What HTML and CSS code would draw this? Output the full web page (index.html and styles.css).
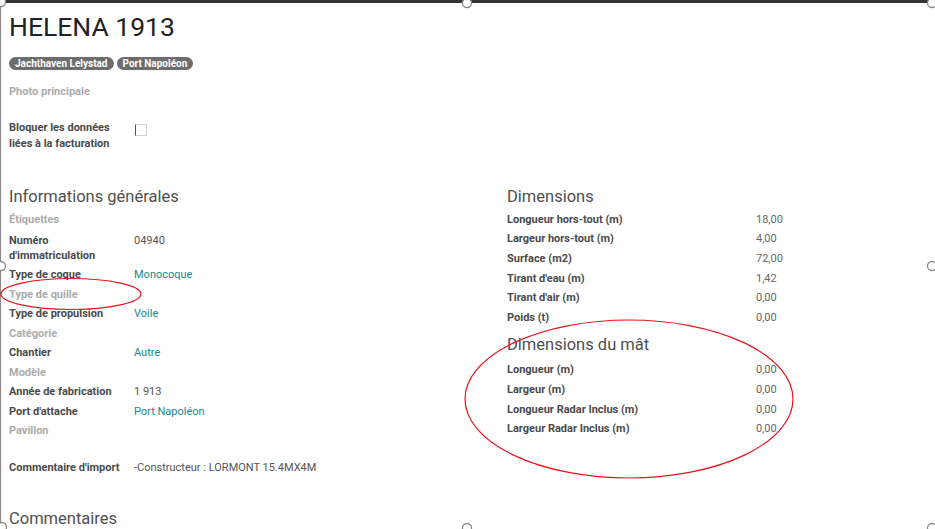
FILE: index.html
```html
<!DOCTYPE html>
<html lang="fr">
<head>
    <meta charset="UTF-8">
    <meta name="viewport" content="width=device-width, initial-scale=1.0">
    <title>HELENA 1913</title>
    <link rel="stylesheet" href="styles.css">
</head>
<body>
    <div class="sheet">
        <h1 class="title">HELENA 1913</h1>

        <div class="tags">
            <span class="tag">Jachthaven Lelystad</span>
            <span class="tag">Port Napoléon</span>
        </div>

        <div class="photo muted">Photo principale</div>

        <div class="lock">
            <span class="label">Bloquer les données<br>liées à la facturation</span>
            <span class="checkbox"></span>
        </div>

        <div class="groups">
            <section class="group left">
                <h2>Informations générales</h2>
                <div class="row"><span class="label muted">Étiquettes</span><span></span></div>
                <div class="row tall"><span class="label">Numéro<br>d'immatriculation</span><span class="value">04940</span></div>
                <div class="row"><span class="label">Type de coque</span><span class="value link">Monocoque</span></div>
                <div class="row"><span class="label muted">Type de quille</span><span></span></div>
                <div class="row"><span class="label">Type de propulsion</span><span class="value link">Voile</span></div>
                <div class="row"><span class="label muted">Catégorie</span><span></span></div>
                <div class="row"><span class="label">Chantier</span><span class="value link">Autre</span></div>
                <div class="row"><span class="label muted">Modèle</span><span></span></div>
                <div class="row"><span class="label">Année de fabrication</span><span class="value">1 913</span></div>
                <div class="row"><span class="label">Port d'attache</span><span class="value link">Port Napoléon</span></div>
                <div class="row"><span class="label muted">Pavillon</span><span></span></div>
                <div class="row import"><span class="label">Commentaire d'import</span><span class="value">-Constructeur : LORMONT 15.4MX4M</span></div>
            </section>

            <section class="group right">
                <h2>Dimensions</h2>
                <div class="row"><span class="label">Longueur hors-tout (m)</span><span class="value">18,00</span></div>
                <div class="row"><span class="label">Largeur hors-tout (m)</span><span class="value">4,00</span></div>
                <div class="row"><span class="label">Surface (m2)</span><span class="value">72,00</span></div>
                <div class="row"><span class="label">Tirant d'eau (m)</span><span class="value">1,42</span></div>
                <div class="row"><span class="label">Tirant d'air (m)</span><span class="value">0,00</span></div>
                <div class="row"><span class="label">Poids (t)</span><span class="value">0,00</span></div>

                <h2 class="sub">Dimensions du mât</h2>
                <div class="row"><span class="label">Longueur (m)</span><span class="value">0,00</span></div>
                <div class="row"><span class="label">Largeur (m)</span><span class="value">0,00</span></div>
                <div class="row"><span class="label">Longueur Radar Inclus (m)</span><span class="value">0,00</span></div>
                <div class="row"><span class="label">Largeur Radar Inclus (m)</span><span class="value">0,00</span></div>
            </section>
        </div>

        <h2 class="comments">Commentaires</h2>
    </div>

    <!-- selection frame and red annotation marks drawn over the screenshot -->
    <svg class="marks" width="935" height="529" viewBox="0 0 935 529">
        <line x1="4" y1="1.5" x2="935" y2="1.5" stroke="#333" stroke-width="3"/>
        <line x1="0.5" y1="5" x2="0.5" y2="529" stroke="#8a8a8a" stroke-width="1.2"/>
        <g fill="#fff" stroke="#8a8a8a" stroke-width="1.3">
            <circle cx="1" cy="2" r="4.5"/>
            <circle cx="467" cy="3" r="4.5"/>
            <circle cx="932" cy="3" r="4.5"/>
            <circle cx="1" cy="266" r="4.5"/>
            <circle cx="932" cy="266" r="4.5"/>
            <circle cx="2" cy="527" r="4.5"/>
            <circle cx="467" cy="528" r="4.5"/>
            <circle cx="932" cy="528" r="4.5"/>
        </g>
        <g fill="none" stroke="#e8141c" stroke-width="1.2">
            <ellipse cx="71" cy="294" rx="70" ry="15.5"/>
            <ellipse cx="629" cy="399" rx="164" ry="79"/>
        </g>
    </svg>
</body>
</html>
```

FILE: styles.css
```css
body {
    margin: 0;
    font-family: Roboto, "Liberation Sans", sans-serif;
    color: #4c4c4c;
    background: #fff;
    overflow: hidden;
}
.sheet {
    padding: 12px 9px 0;
    height: 517px;
}
.title {
    margin: 0;
    font-size: 26.5px;
    font-weight: 400;
    line-height: 30px;
    color: #222;
}
.tags {
    display: flex;
    gap: 3px;
    margin-top: 15px;
}
.tag {
    background: #6d6d6d;
    color: #fff;
    font-size: 10px;
    font-weight: 700;
    line-height: 13px;
    padding: 0 6px;
    border-radius: 7px;
}
.label {
    font-size: 11px;
    font-weight: 700;
    color: #4a4a4a;
}
.muted,
.label.muted {
    color: #ababab;
}
.photo {
    margin-top: 13.5px;
    font-size: 11px;
    font-weight: 700;
    line-height: 15px;
}
.lock {
    display: grid;
    grid-template-columns: 126px 1fr;
    margin-top: 21.5px;
    line-height: 16px;
}
.checkbox {
    width: 10px;
    height: 10px;
    margin-top: 4px;
    border: 1px solid #d4d4d4;
    border-left: 1px solid #555;
}
.groups {
    display: grid;
    grid-template-columns: 498px 1fr;
    margin-top: 33.5px;
}
h2 {
    margin: 0 0 2px;
    font-size: 16.5px;
    font-weight: 400;
    line-height: 22px;
    color: #4f4f4f;
}
.row {
    display: grid;
    padding: 2.25px 0;
    line-height: 15px;
}
.left .row {
    grid-template-columns: 125px 1fr;
}
.right .row {
    grid-template-columns: 249px 1fr;
    padding: 2.3px 0;
}
.row.tall {
    padding-top: 3.5px;
}
.row.import {
    margin-top: 17.5px;
}
.value {
    font-size: 11px;
    color: #555;
}
.right .value {
    color: #666;
}
.link {
    color: #1b868c;
}
h2.sub {
    margin-top: 7px;
    margin-bottom: 4px;
}
h2.comments {
    margin-top: 31px;
}
.marks {
    position: absolute;
    top: 0;
    left: 0;
    pointer-events: none;
}
```
